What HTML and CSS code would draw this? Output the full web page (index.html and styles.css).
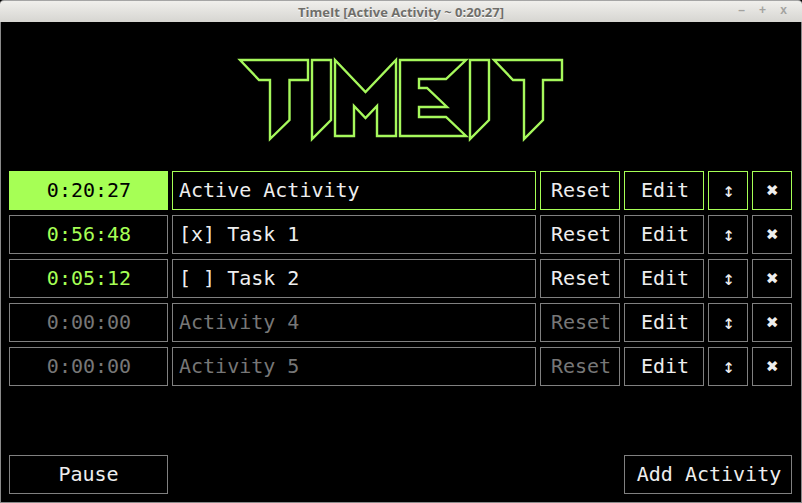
FILE: index.html
```html
<!DOCTYPE html>
<html lang="en">
<head>
<meta charset="utf-8">
<title>TimeIt</title>
<link rel="stylesheet" href="styles.css">
</head>
<body>
<div class="window">
  <header class="titlebar">
    <span class="title">TimeIt [Active Activity ~ 0:20:27]</span>
    <span class="controls"><span>–</span><span>+</span><span>x</span></span>
  </header>
  <main class="content">
    <div class="logo">
      <svg width="802" height="146" viewBox="0 22 802 146" aria-label="TimeIt">
        <g class="logo-lines">
          <path d="M240 60H308V80H289.500V120L270 139V80H259Z"/>
          <path d="M312 60H331V120L312 139Z"/>
          <path d="M335 60L365.500 92L396 60V136H377V106L365.500 118L354 106V136H335Z"/>
          <path d="M400 60H466L446 79H419V88H427L447 107H419V117H446L466 136H400Z"/>
          <path d="M470 60H489V120L470 139Z"/>
          <path d="M494 60H562V80H543V120L524 139V80H513Z"/>
        </g>
      </svg>
    </div>
    <section class="rows">
      <div class="row row-active">
        <div class="cell timer timer-active">0:20:27</div>
        <div class="cell name">Active Activity</div>
        <div class="cell btn reset">Reset</div>
        <div class="cell btn edit">Edit</div>
        <div class="cell btn icon move">↕</div>
        <div class="cell btn icon del">✖</div>
      </div>
      <div class="row">
        <div class="cell timer timer-on">0:56:48</div>
        <div class="cell name">[x] Task 1</div>
        <div class="cell btn reset">Reset</div>
        <div class="cell btn edit">Edit</div>
        <div class="cell btn icon move">↕</div>
        <div class="cell btn icon del">✖</div>
      </div>
      <div class="row">
        <div class="cell timer timer-on">0:05:12</div>
        <div class="cell name">[ ] Task 2</div>
        <div class="cell btn reset">Reset</div>
        <div class="cell btn edit">Edit</div>
        <div class="cell btn icon move">↕</div>
        <div class="cell btn icon del">✖</div>
      </div>
      <div class="row">
        <div class="cell timer dim">0:00:00</div>
        <div class="cell name dim">Activity 4</div>
        <div class="cell btn reset dim">Reset</div>
        <div class="cell btn edit">Edit</div>
        <div class="cell btn icon move">↕</div>
        <div class="cell btn icon del">✖</div>
      </div>
      <div class="row">
        <div class="cell timer dim">0:00:00</div>
        <div class="cell name dim">Activity 5</div>
        <div class="cell btn reset dim">Reset</div>
        <div class="cell btn edit">Edit</div>
        <div class="cell btn icon move">↕</div>
        <div class="cell btn icon del">✖</div>
      </div>
    </section>
    <footer class="footer">
      <div class="cell btn pause">Pause</div>
      <div class="cell btn add">Add Activity</div>
    </footer>
  </main>
</div>
</body>
</html>
```
FILE: styles.css
```css
* { box-sizing: border-box; }
html, body { margin: 0; padding: 0; background: #000; }
.window {
  width: 802px;
  height: 503px;
  display: flex;
  flex-direction: column;
  background: #000;
  overflow: hidden;
}
.titlebar {
  height: 22px;
  flex: none;
  position: relative;
  display: flex;
  align-items: center;
  justify-content: center;
  background: linear-gradient(#f0efec, #d6d5d1);
  border-top: 1px solid #a5a5a5;
  border-radius: 4px 4px 0 0;
}
.title {
  font: bold 13px "Open Sans", "Noto Sans", sans-serif;
  color: #6f6e6a;
  text-shadow: 0 1px 0 #fff;
}
.controls {
  position: absolute;
  right: 8px;
  top: 2px;
  display: flex;
  font: bold 12px "Liberation Sans", sans-serif;
  color: #a3a29f;
}
.controls span { width: 21px; text-align: center; }
.content {
  flex: 1;
  display: flex;
  flex-direction: column;
  border: solid #8a8a8a;
  border-width: 0 1px 1px;
  padding: 0 9px 8px 8px;
  font: 20px "DejaVu Sans Mono", monospace;
  color: #eeeeee;
}
.logo { height: 149px; margin: 0 -9px 0 -8px; flex: none; }
.logo svg { display: block; margin-left: -1px; }
.logo-lines path { fill: none; stroke: #a6f85c; stroke-width: 2.400; }
.rows { display: flex; flex-direction: column; gap: 5px; }
.row {
  display: grid;
  grid-template-columns: 159px 364px 80px 80px 40px 40px;
  column-gap: 4px;
}
.cell {
  height: 39px;
  display: flex;
  align-items: center;
  padding-bottom: 2px;
  border: 1px solid #808080;
  white-space: nowrap;
}
.row-active .cell { border-color: #a6ff55; }
.btn { justify-content: center; padding-left: 2px; }
.timer { justify-content: center; padding-left: 1px; }
.name { padding-left: 6px; }
.timer-active { background: #a6ff55; color: #000; }
.timer-on { color: #a6ff55; }
.dim { color: #777; }
.icon { font-size: 20px; padding-left: 1px; }
.del { font-weight: bold; }
.footer {
  margin-top: auto;
  display: flex;
  justify-content: space-between;
}
.pause { width: 159px; padding-left: 0; }
.add { width: 168px; }
```
